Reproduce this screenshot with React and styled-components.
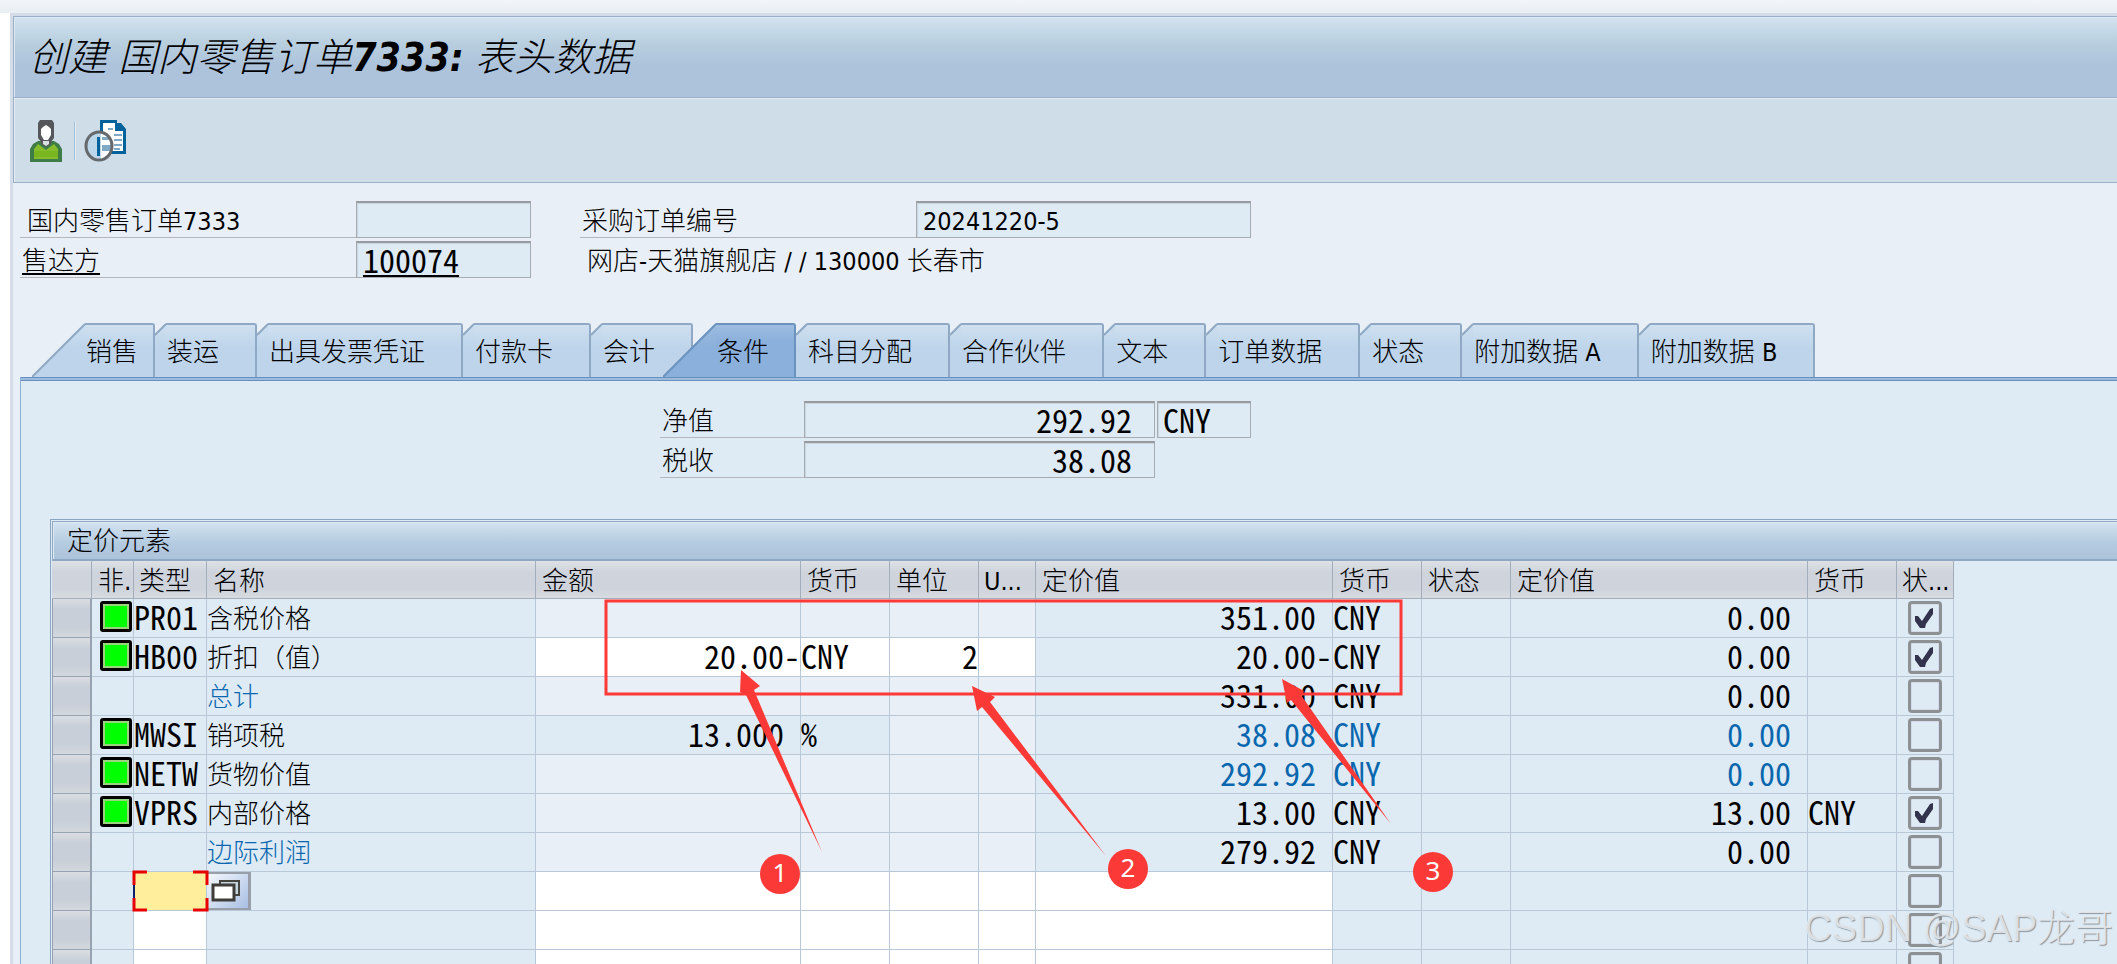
import React from 'react';
import styled, { createGlobalStyle, css } from 'styled-components';

const GlobalStyle = createGlobalStyle`
  html,
  body {
    margin: 0;
    padding: 0;
    background: #fff;
  }

  * {
    box-sizing: border-box;
  }

  body,
  button,
  input {
    color: #000;
    font-family: 'DejaVu Sans Condensed', 'Noto Sans CJK SC', sans-serif;
    font-size: 26px;
    font-weight: 300;
    line-height: 36px;
  }
`;

const mono = css`
  padding-top: 0;
  font-family: 'Noto Sans Mono CJK SC', 'Liberation Mono', monospace;
  font-size: 32px;
  line-height: 34px;
  font-weight: 300;
`;

const Page = styled.div`
  position: relative;
  height: 100vh;
  padding: 13px 0 0 10px;
  overflow: hidden;
  background: linear-gradient(#f2f5f9, #e9eef4 13px, #fff 13px);
`;

const Screen = styled.main`
  display: flex;
  flex-direction: column;
  height: 100%;
  border-top: 3px solid #d5dbe7;
  border-left: 3px solid #d5dbe7;
  background: #e8eff6;
`;

const TitleBar = styled.header`
  display: flex;
  flex: none;
  align-items: center;
  height: 82px;
  padding: 2px 15px 0;
  border: 1px solid #9ab0c8;
  border-right: 0;
  background: linear-gradient(#d3e3f0, #b8cfdf 26px, #adc3db 48px, #adc3db);
  box-shadow: inset 1px 1px 0 #dbe7f1;
`;

const Title = styled.h1`
  margin: 0;
  font-size: 39px;
  font-style: italic;
  font-weight: 300;
  line-height: 48px;
`;

const Strong = styled.span`
  font-weight: 700;
`;

const Latin = styled.span`
  font-size: 25px;
  font-weight: 400;
`;

const Toolbar = styled.nav`
  display: flex;
  flex: none;
  align-items: center;
  gap: 8px;
  height: 85px;
  padding: 2px 16px 0;
  border: solid #9ab0c8;
  border-width: 0 0 1px 1px;
  background: #cfdde8;
  box-shadow: inset 1px 1px 0 #e3ecf3;
`;

const ToolButton = styled.button`
  display: flex;
  padding: 0;
  border: 0;
  background: none;
`;

const ToolDivider = styled.span`
  width: 2px;
  height: 38px;
  margin: 0 0 0 4px;
  border-left: 1px solid #9fc0d8;
  background: #e3ecf3;
`;

const HeaderForm = styled.section`
  display: grid;
  flex: none;
  grid-template-columns: 336px 175px 49px 336px 335px;
  grid-auto-rows: 37px;
  row-gap: 3px;
  padding: 18px 0 0 7px;
`;

const FieldLabel = styled.label`
  height: 37px;
  padding: 2px 0 0 ${props => props.$indent || 2}px;
  border-bottom: 1px solid #b3b7bb;
  text-decoration: ${props => (props.$link ? 'underline' : 'none')};
  text-decoration-thickness: 2px;
  text-underline-offset: 3px;
  line-height: 36px;
  white-space: nowrap;
`;

const Field = styled.input`
  width: 100%;
  height: 37px;
  padding: 2px ${props => (props.$number ? 22 : 6)}px 0 6px;
  border: 1px solid #a6abb0;
  border-top: 2px solid #979b9f;
  border-radius: 0;
  outline: 0;
  background: #deebf5;
  box-shadow: inset 1px 1px 1px #c9d5de;
  font-size: 25px;
  font-weight: 400;
  line-height: 30px;
  text-align: ${props => (props.$number ? 'right' : 'left')};
  ${props => props.$mono && mono}
  padding-bottom: ${props => (props.$mono ? 2 : 0)}px;
  text-decoration: ${props => (props.$link ? 'underline 2px' : 'none')};
  text-underline-offset: 2px;
`;

const CurrencyField = styled(Field)`
  width: 94px;
  margin-left: 2px;
  padding-left: 5px;
`;

const Address = styled.output`
  grid-column: 4 / 6;
  padding: 2px 0 0 7px;
  white-space: nowrap;
`;

const TabList = styled.div`
  display: flex;
  flex: none;
  align-items: flex-end;
  margin-top: 45px;
  padding-left: 19px;
`;

const Tab = styled.button`
  display: flex;
  flex: none;
  position: relative;
  height: 54px;
  margin: 0 0 0 ${props => (props.$active ? -30 : 0)}px;
  padding: 0;
  border: 0;
  background: none;
`;

const TabBody = styled.span`
  height: 54px;
  padding: 9px ${props => props.$right}px 0 1px;
  border: solid ${props => (props.$active ? '#6c93bf' : '#8fa9c4')};
  border-width: 2px 2px 0 0;
  border-top-right-radius: 3px;
  background: ${props =>
    props.$active
      ? 'linear-gradient(#9dbde0, #8bb0db 16px)'
      : 'linear-gradient(#cfe0f0, #bdd4ea 24px)'};
  white-space: pre;
`;

const Panel = styled.section`
  flex: 1;
  min-height: 0;
  margin-left: 7px;
  padding: 21px 0 0 29px;
  border-left: 1px solid #8fafd0;
  background: linear-gradient(#6790bd 1px, #9cbbdf 1px, #9cbbdf 3px, #6790bd 3px, #6790bd 4px, #deebf5 4px);
`;

const Totals = styled.div`
  display: grid;
  grid-template-columns: 144px 351px 96px;
  grid-auto-rows: 37px;
  gap: 3px 0;
  margin: 3px 0 0 610px;
`;

const TableFrame = styled.div`
  margin-top: 41px;
  padding: 1px 0 0 1px;
  border: solid #8aa6c3;
  border-width: 1px 0 0 1px;
`;

const TableTitle = styled.h2`
  height: 40px;
  margin: 0;
  padding: 1px 0 0 14px;
  border: solid #8fa9c4;
  border-width: 1px 0 2px 1px;
  background: linear-gradient(#d3e3f0, #b3cadf 22px, #adc3db);
  box-shadow: inset 1px 1px 0 #dde9f3;
  font-size: 26px;
  font-weight: 300;
`;

const Grid = styled.table`
  width: 1902px;
  table-layout: fixed;
  border-spacing: 0;
`;

const HeadCell = styled.th`
  height: 38px;
  padding: 4px 0 0 ${props => (props.$tight ? 5 : 6)}px;
  overflow: hidden;
  border: solid #a4aebb;
  border-width: 0 1px 1px 0;
  background: linear-gradient(#dde1e5, #ced3dc 12px, #ced3dc 28px, #d8dce0);
  font-weight: 300;
  line-height: 33px;
  text-align: left;
  vertical-align: top;
  white-space: nowrap;
`;

const tones = {
  plain: '#deebf5',
  light: '#e8eff6',
  open: '#fff',
  focus: '#ffee9c',
};

const Cell = styled.td`
  height: 39px;
  padding: ${props => (props.$flush ? 0 : 2)}px ${props => props.$end || 0}px 0 0;
  border: solid #b9c8d6;
  border-width: 0 1px 1px 0;
  background: ${props => tones[props.$tone || 'plain']};
  color: ${props => (props.$blue ? '#0a67ae' : '#000')};
  line-height: 36px;
  text-align: ${props => (props.$number ? 'right' : 'left')};
  vertical-align: top;
  white-space: pre;
  ${props => props.$mono && mono}
`;

const RowHead = styled.td`
  height: 39px;
  padding: 0;
  border: solid #98a3b1;
  border-width: 0 2px 1px 1px;
  background: linear-gradient(#dadee3, #c9cfd8 10px, #c9cfd8 28px, #d3d8de);
`;

const Lamp = styled.span`
  display: block;
  width: 32px;
  height: 31px;
  margin-left: 8px;
  border: 3px solid #000;
  border-radius: 3px;
  background: #00ff00;
  box-shadow: inset 0 0 0 2px #9bd47f;
`;

const Check = styled.input`
  display: block;
  appearance: none;
  width: 34px;
  height: 34px;
  margin: 0 auto;
  border: 3px solid #8d9193;
  border-radius: 4px;
  background: #deebf5;
  box-shadow: inset 0 0 0 1px #d3dce8;

  &:checked {
    background: #deebf5
      url("data:image/svg+xml,%3Csvg xmlns='http://www.w3.org/2000/svg' viewBox='0 0 28 28'%3E%3Cpath d='M4 12h3l4 5 8-12 3-1v6l-7 10-1 4h-5l-5-7z' fill='%2333334d'/%3E%3C/svg%3E");
  }
`;

const Brackets = styled.svg`
  display: block;
  overflow: visible;
`;

const MatchButton = styled.button`
  display: flex;
  align-items: center;
  justify-content: center;
  width: 44px;
  height: 38px;
  padding: 0 4px 0 0;
  border: solid #999fa8;
  border-width: 2px 3px 2px 0;
  background: linear-gradient(135deg, #f6f9fd, #a9bfe4);
`;

const Overlay = styled.svg`
  position: absolute;
  top: 0;
  left: 0;
  pointer-events: none;
`;

const Badge = styled.span`
  position: absolute;
  top: ${props => props.$top}px;
  left: ${props => props.$left}px;
  width: 40px;
  height: 40px;
  border-radius: 50%;
  background: #fb3a38;
  color: #fff;
  font-family: 'Noto Sans', sans-serif;
  font-size: 26px;
  font-weight: 400;
  line-height: 36px;
  text-align: center;
`;

const Watermark = styled.span`
  position: absolute;
  right: 4px;
  bottom: 12px;
  color: rgba(232, 236, 240, 0.85);
  font-family: 'Liberation Sans', 'Noto Sans CJK SC', sans-serif;
  font-size: 38px;
  line-height: 48px;
  text-shadow: 1px 1px 1px #8d969e;
`;

const tabs = [
  { text: '销售', first: true, right: 15 },
  { text: '装运' },
  { text: '出具发票凭证' },
  { text: '付款卡' },
  { text: '会计' },
  { text: '条件', active: true, right: 25 },
  { text: '科目分配' },
  { text: '合作伙伴' },
  { text: '文本' },
  { text: '订单数据' },
  { text: '状态' },
  { text: '附加数据', latin: ' A' },
  { text: '附加数据', latin: ' B' },
];

const columns = [
  { width: 40, text: '' },
  { width: 42, text: '非.' },
  { width: 73, text: '类型', tight: true },
  { width: 329, text: '名称' },
  { width: 265, text: '金额' },
  { width: 89, text: '货币' },
  { width: 89, text: '单位' },
  { width: 57, latin: 'U...', tight: true },
  { width: 297, text: '定价值' },
  { width: 89, text: '货币' },
  { width: 89, text: '状态' },
  { width: 297, text: '定价值' },
  { width: 89, text: '货币' },
  { width: 57, text: '状', latin: '...', tight: true },
];

const rows = [
  { type: 'PR01', name: '含税价格', value: '351.00 ', currency: 'CNY', cost: '0.00', checked: true },
  {
    type: 'HB00',
    name: '折扣（值）',
    amount: '20.00-',
    unit: 'CNY',
    per: '2',
    value: '20.00-',
    currency: 'CNY',
    cost: '0.00',
    checked: true,
    amountTone: 'open',
    unitTone: 'open',
  },
  { name: '总计', blueName: true, value: '331.00 ', currency: 'CNY', cost: '0.00' },
  {
    type: 'MWSI',
    name: '销项税',
    amount: '13.000 ',
    unit: '%',
    value: '38.08 ',
    currency: 'CNY',
    cost: '0.00',
    blue: true,
    amountTone: 'plain',
  },
  { type: 'NETW', name: '货物价值', value: '292.92 ', currency: 'CNY', cost: '0.00', blue: true },
  {
    type: 'VPRS',
    name: '内部价格',
    value: '13.00 ',
    currency: 'CNY',
    cost: '13.00',
    costCurrency: 'CNY',
    checked: true,
  },
  { name: '边际利润', blueName: true, value: '279.92 ', currency: 'CNY', cost: '0.00' },
  { entry: true, focus: true },
  { entry: true },
  { entry: true },
];

const arrows = [
  'M741 670L760 686L754 690L822 852L746 695L740 692Z',
  'M972 686L995 697L990 702L1106 856L982 707L977 711Z',
  'M1282 679L1304 691L1301 695L1391 824L1291 700L1287 703Z',
];

const UserIcon = () => (
  <svg width="32" height="42" viewBox="0 0 32 42">
    <path d="M3 24L8 21H24L29 24L32 29V42H0V29Z" fill="#3f7d46" />
    <path d="M4 29L8 24L16 30L24 24L28 29V39H4Z" fill="#86bd2c" />
    <path d="M4 31H28V37H4Z" fill="#78b51e" />
    <path d="M10 0H22L24 3V18L21 22V24L16 27L11 24V22L8 18V3Z" fill="#55575a" />
    <path d="M13 7L16 5L19 7L21 9V15L18 20H14L11 15V9Z" fill="#fff" />
    <path d="M13 21H19V24L16 26L13 24Z" fill="#dcdfe2" />
  </svg>
);

const DocumentIcon = () => (
  <svg width="43" height="42" viewBox="0 0 43 42">
    <path d="M16 0H33V3H37L42 9V34H16Z" fill="#00629b" />
    <path d="M19 3H31V11H39V31H19Z" fill="#fff" />
    <path d="M24 9h5M30 15h8M30 20h8M30 25h8M30 29h6" stroke="#7fa9c4" strokeWidth="2" />
    <ellipse cx="15" cy="26" rx="13" ry="14" fill="#bcd7ea" />
    <path d="M17 13L26 19V33L17 39Z" fill="#fff" />
    <path d="M18 17h7v3h-7zM18 25h9v6h-9z" fill="#7fa9c4" />
    <path d="M13 17H16V36H13Z" fill="#00629b" />
    <ellipse cx="15" cy="26" rx="13" ry="14" fill="none" stroke="#66696c" strokeWidth="3" />
  </svg>
);

const TabItem = ({ text, latin, first, active, right = 36 }) => {
  const wide = first || active;
  const width = wide ? 53 : 11;
  const drop = wide ? 54 : 12;
  const fill = active ? '#8bb0db' : '#bdd4ea';
  const topFill = active ? '#9dbde0' : '#cfe0f0';
  const id = `corner-${active ? 'active' : 'idle'}-${width}`;

  return (
    <Tab type="button" role="tab" aria-selected={!!active} $active={active}>
      <svg width={width} height="54">
        <linearGradient id={id} gradientUnits="userSpaceOnUse" x1="0" y1="0" x2="0" y2="24">
          <stop stopColor={topFill} />
          <stop offset="1" stopColor={fill} />
        </linearGradient>
        <path d={`M0 ${drop}L${width} 0V54H0Z`} fill={`url(#${id})`} />
        <path
          d={`M0 ${drop}L${width} 1`}
          stroke={active ? '#6c93bf' : '#8fa9c4'}
          strokeWidth="2"
        />
      </svg>
      <TabBody $active={active} $right={right}>
        {text}
        {latin && <Latin>{latin}</Latin>}
      </TabBody>
    </Tab>
  );
};

const PricingRow = ({ row, index }) => {
  const entry = row.entry ? 'open' : undefined;
  const amountTone = entry || row.amountTone || 'light';
  const unitTone = entry || row.unitTone || 'light';

  return (
    <tr>
      <RowHead />
      <Cell>{row.type && <Lamp />}</Cell>
      <Cell $mono $tone={row.focus ? 'focus' : entry}>
        {row.focus ? (
          <Brackets width="73" height="38">
            <path d="M0 13V26" stroke="#0b1f6b" strokeWidth="2" />
            <path
              d="M13 0H0V13M0 26V38H13M59 0H73V13M73 26V38H59"
              fill="none"
              stroke="#e60000"
              strokeWidth="3"
            />
          </Brackets>
        ) : (
          row.type
        )}
      </Cell>
      <Cell $blue={row.blueName} $flush={row.focus}>
        {row.focus ? (
          <MatchButton type="button" aria-label="匹配码">
            <svg width="30" height="24" viewBox="0 0 30 24">
              <path d="M9 2H28V16H9Z" fill="#c5d6de" stroke="#45443f" strokeWidth="2" />
              <path d="M2 6H23V21H2Z" fill="#fff" stroke="#3e3d3a" strokeWidth="3" />
            </svg>
          </MatchButton>
        ) : (
          row.name
        )}
      </Cell>
      <Cell $mono $number $tone={amountTone}>
        {row.amount}
      </Cell>
      <Cell $mono $tone={amountTone}>
        {row.unit}
      </Cell>
      <Cell $mono $number $tone={unitTone}>
        {row.per}
      </Cell>
      <Cell $tone={unitTone} />
      <Cell $mono $number $blue={row.blue} $tone={entry}>
        {row.value}
      </Cell>
      <Cell $mono $blue={row.blue}>
        {row.currency}
      </Cell>
      <Cell />
      <Cell $mono $number $end={16} $blue={row.blue}>
        {row.cost}
      </Cell>
      <Cell $mono>{row.costCurrency}</Cell>
      <Cell>
        <Check type="checkbox" aria-label={`状态 ${index + 1}`} defaultChecked={row.checked} />
      </Cell>
    </tr>
  );
};

const App = () => (
  <>
    <GlobalStyle />
    <Page>
      <Screen>
        <TitleBar>
          <Title>
            创建 国内零售订单<Strong>7333:</Strong> 表头数据
          </Title>
        </TitleBar>
        <Toolbar>
          <ToolButton type="button" aria-label="客户">
            <UserIcon />
          </ToolButton>
          <ToolDivider />
          <ToolButton type="button" aria-label="凭证">
            <DocumentIcon />
          </ToolButton>
        </Toolbar>
        <HeaderForm>
          <FieldLabel htmlFor="order" $indent={7}>
            国内零售订单<Latin>7333</Latin>
          </FieldLabel>
          <Field id="order" readOnly value="" />
          <span />
          <FieldLabel htmlFor="po">采购订单编号</FieldLabel>
          <Field id="po" readOnly value="20241220-5" />
          <FieldLabel htmlFor="sold-to" $link>
            售达方
          </FieldLabel>
          <Field id="sold-to" readOnly value="100074" $mono $link />
          <Address>
            网店<Latin>-</Latin>天猫旗舰店<Latin> / / 130000 </Latin>长春市
          </Address>
        </HeaderForm>
        <TabList role="tablist">
          {tabs.map(tab => (
            <TabItem key={tab.text + (tab.latin || '')} {...tab} />
          ))}
        </TabList>
        <Panel>
          <Totals>
            <FieldLabel htmlFor="net">净值</FieldLabel>
            <Field id="net" readOnly value="292.92" $mono $number />
            <CurrencyField aria-label="货币" readOnly value="CNY" $mono />
            <FieldLabel htmlFor="tax">税收</FieldLabel>
            <Field id="tax" readOnly value="38.08" $mono $number />
          </Totals>
          <TableFrame>
            <TableTitle>定价元素</TableTitle>
            <Grid>
              <colgroup>
                {columns.map((column, index) => (
                  <col key={index} style={{ width: column.width }} />
                ))}
              </colgroup>
              <thead>
                <tr>
                  {columns.map((column, index) => (
                    <HeadCell key={index} $tight={column.tight}>
                      {column.text}
                      {column.latin && <Latin>{column.latin}</Latin>}
                    </HeadCell>
                  ))}
                </tr>
              </thead>
              <tbody>
                {rows.map((row, index) => (
                  <PricingRow key={index} row={row} index={index} />
                ))}
              </tbody>
            </Grid>
          </TableFrame>
        </Panel>
      </Screen>
      <Overlay width="1500" height="900" fill="#fb3a38">
        <path d="M606 601H1401V694H606Z" fill="none" stroke="#fb3a38" strokeWidth="3" />
        {arrows.map(d => (
          <path key={d} d={d} />
        ))}
      </Overlay>
      <Badge $left={760} $top={854}>
        1
      </Badge>
      <Badge $left={1108} $top={849}>
        2
      </Badge>
      <Badge $left={1413} $top={852}>
        3
      </Badge>
      <Watermark>CSDN @SAP龙哥</Watermark>
    </Page>
  </>
);

export default App;
